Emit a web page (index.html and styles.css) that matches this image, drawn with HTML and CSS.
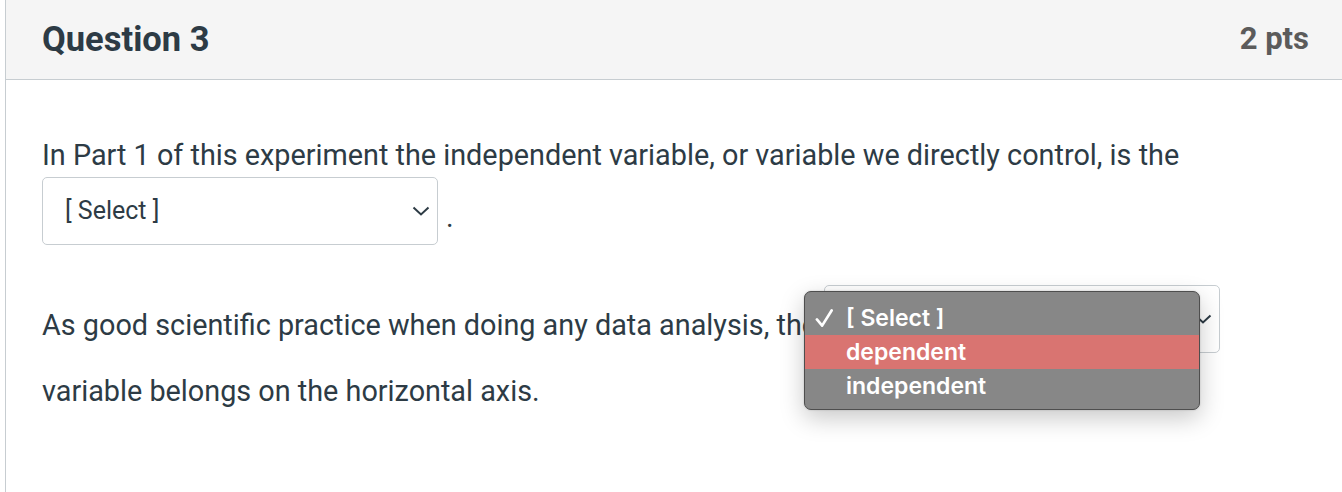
FILE: index.html
```html
<!DOCTYPE html>
<html lang="en">
<head>
<meta charset="utf-8">
<title>Question 3</title>
<link rel="stylesheet" href="styles.css">
</head>
<body>
<div class="question">
  <div class="q-header">
    <h2 class="q-title">Question 3</h2>
    <span class="q-points">2 pts</span>
  </div>
  <div class="q-body">
    <p class="q-text">In Part 1 of this experiment the independent variable, or variable we directly control, is the
      <span class="sel"><span class="sel-label">[ Select ]</span><svg class="chev" width="18" height="10" viewBox="0 0 18 10"><path d="M1.5 1.5 L9 8.5 L16.5 1.5" fill="none" stroke="#2d3b45" stroke-width="2"/></svg></span>.</p>
    <p class="q-text">As good scientific practice when doing any data analysis, the
      <span class="sel"><span class="sel-label">[ Select ]</span><svg class="chev" width="18" height="10" viewBox="0 0 18 10"><path d="M1.5 1.5 L9 8.5 L16.5 1.5" fill="none" stroke="#2d3b45" stroke-width="2"/></svg></span> variable belongs on the horizontal axis.</p>
  </div>
</div>
<div class="menu">
  <div class="menu-item"><svg class="check" width="20" height="20" viewBox="0 0 20 20"><path d="M2 11 L7.5 17.5 L17.5 1.5" fill="none" stroke="#ffffff" stroke-width="2.8" stroke-linecap="round" stroke-linejoin="round"/></svg>[ Select ]</div>
  <div class="menu-item active">dependent</div>
  <div class="menu-item">independent</div>
</div>
</body>
</html>
```
FILE: styles.css
```css
html, body {
  margin: 0;
  padding: 0;
  background: #ffffff;
}
body {
  font-family: Roboto, "Liberation Sans", sans-serif;
  color: #2d3b45;
  position: relative;
  height: 492px;
  overflow: hidden;
}
.question {
  margin-left: 5px;
  border-left: 1px solid #c7cdd1;
  height: 492px;
}
.q-header {
  height: 80px;
  box-sizing: border-box;
  background: #f5f5f5;
  border-bottom: 1px solid #c7cdd1;
  display: flex;
  align-items: center;
  justify-content: space-between;
  padding: 0 33px 2px 36px;
}
.q-title {
  margin: 0;
  font-size: 34.5px;
  font-weight: 700;
  color: #2d3b45;
}
.q-points {
  font-size: 31px;
  font-weight: 700;
  color: #5b5b5b;
}
.q-body {
  padding: 53px 36px 0 36px;
}
.q-text {
  margin: 0 0 24px 0;
  font-size: 28.8px;
  line-height: 44px;
  width: 1260px;
}
.sel {
  display: inline-flex;
  align-items: center;
  justify-content: space-between;
  box-sizing: border-box;
  width: 396px;
  height: 68px;
  padding: 0 7px 0 22px;
  border: 1px solid #c7cdd1;
  border-radius: 5px;
  background: #fff;
  margin: 0 8px 16px 0;
  vertical-align: middle;
  font-size: 25px;
  line-height: 30px;
}
.sel-label {
  color: #2d3b45;
}
.chev {
  display: block;
}
.menu {
  position: absolute;
  left: 804px;
  top: 291px;
  width: 396px;
  height: 119px;
  box-sizing: border-box;
  padding: 9px 0 8px 0;
  background: #878787;
  border: 1px solid #4e4e4e;
  border-radius: 7px;
  box-shadow: 0 8px 24px rgba(0,0,0,0.22), 0 0 2px rgba(0,0,0,0.2);
  font-family: Inter, "Open Sans", sans-serif;
  font-weight: 600;
  font-size: 23px;
  color: #ffffff;
}
.menu-item {
  height: 34px;
  line-height: 34px;
  padding-left: 41px;
  position: relative;
}
.menu-item.active {
  background: #d97471;
}
.check {
  position: absolute;
  left: 10px;
  top: 8px;
  width: 19px;
  height: 19px;
}
```
